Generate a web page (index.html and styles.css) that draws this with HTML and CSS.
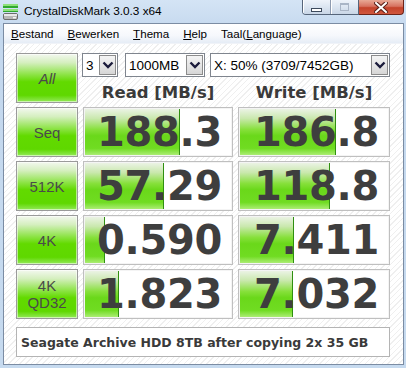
FILE: index.html
```html
<!DOCTYPE html>
<html lang="nl">
<head>
    <meta charset="UTF-8">
    <title>CrystalDiskMark 3.0.3 x64</title>
    <link rel="stylesheet" href="styles.css">
</head>
<body>
<div class="window">
    <div class="titlebar">
        <svg class="app-icon" width="16" height="17" viewBox="0 0 16 17">
            <rect x="0" y="0" width="15" height="2" fill="#8fe07a"/>
            <rect x="0" y="2" width="15" height="2" fill="#2fa82f"/>
            <rect x="0" y="5" width="15" height="2" fill="#8fe07a"/>
            <rect x="0" y="7" width="15" height="1" fill="#2fa82f"/>
            <rect x="0.5" y="9.5" width="14" height="6" rx="1.5" fill="#b8b8b8" stroke="#6c6c6c"/>
            <rect x="1" y="10" width="13" height="2" fill="#e8e8e8"/>
            <rect x="10" y="13" width="3" height="1.5" fill="#f4f4f4"/>
        </svg>
        <span class="title">CrystalDiskMark 3.0.3 x64</span>
        <div class="caption">
            <div class="cap-group">
                <span class="cap-btn"><span class="min-glyph"></span></span>
                <span class="cap-btn"><span class="max-glyph"></span></span>
            </div>
            <span class="cap-close">
                <svg width="14" height="11" viewBox="0 0 14 11">
                    <path d="M2 1 L12 10 M12 1 L2 10" stroke="#5a2018" stroke-width="4" stroke-linecap="square"/>
                    <path d="M2 1 L12 10 M12 1 L2 10" stroke="#ffffff" stroke-width="2" stroke-linecap="square"/>
                </svg>
            </span>
        </div>
    </div>

    <div class="client">
        <div class="menubar">
            <span class="menu-item"><u>B</u>estand</span>
            <span class="menu-item"><u>B</u>ewerken</span>
            <span class="menu-item"><u>T</u>hema</span>
            <span class="menu-item"><u>H</u>elp</span>
            <span class="menu-item">Taal(<u>L</u>anguage)</span>
        </div>

        <div class="main">
            <div class="grid">
                <div class="test-btn all">All</div>
                <div class="controls">
                    <div class="select sel-count"><span class="sel-text">3</span><span class="sel-arrow"><svg width="12" height="8" viewBox="0 0 12 8"><path d="M1.5 1.5 L6 6 L10.5 1.5" fill="none" stroke="#1c1c3c" stroke-width="2.4"/></svg></span></div>
                    <div class="select sel-size"><span class="sel-text">1000MB</span><span class="sel-arrow"><svg width="12" height="8" viewBox="0 0 12 8"><path d="M1.5 1.5 L6 6 L10.5 1.5" fill="none" stroke="#1c1c3c" stroke-width="2.4"/></svg></span></div>
                    <div class="select sel-drive"><span class="sel-text">X: 50% (3709/7452GB)</span><span class="sel-arrow"><svg width="12" height="8" viewBox="0 0 12 8"><path d="M1.5 1.5 L6 6 L10.5 1.5" fill="none" stroke="#1c1c3c" stroke-width="2.4"/></svg></span></div>
                </div>
                <div class="head">Read [MB/s]</div>
                <div class="head">Write [MB/s]</div>

                <div class="test-btn">Seq</div>
                <div class="cell" style="--w:96px">188.3</div>
                <div class="cell" style="--w:97px">186.8</div>

                <div class="test-btn">512K</div>
                <div class="cell" style="--w:80px">57.29</div>
                <div class="cell" style="--w:91px">118.8</div>

                <div class="test-btn">4K</div>
                <div class="cell" style="--w:21px">0.590</div>
                <div class="cell" style="--w:55px">7.411</div>

                <div class="test-btn two-line">4K<br>QD32</div>
                <div class="cell" style="--w:35px">1.823</div>
                <div class="cell" style="--w:54px">7.032</div>
            </div>

            <div class="comment">Seagate Archive HDD 8TB after copying 2x 35 GB</div>
        </div>
    </div>
</div>
</body>
</html>
```

FILE: styles.css
```css
html, body { margin: 0; padding: 0; }
body { width: 406px; height: 368px; overflow: hidden; background: #c6daef; font-family: "Liberation Sans", Arial, sans-serif; }

/* window frame */
.window { width: 406px; height: 368px; box-sizing: border-box; padding: 0 2px 3px 3px; display: flex; flex-direction: column; background: linear-gradient(#d4e4f5, #c4d8ee 30px, #c6daef); }
.titlebar { height: 23px; display: flex; align-items: flex-start; flex-shrink: 0; }
.app-icon { margin: 4px 0 0 0; flex-shrink: 0; }
.title { margin: 4px 0 0 5px; font-size: 11.8px; color: #000; line-height: 14px; }

.caption { margin-left: auto; display: flex; height: 15px; }
.cap-group { display: flex; border: 1px solid #56657a; border-top: none; border-radius: 0 0 0 4px; overflow: hidden; }
.cap-btn { width: 27px; height: 14px; display: flex; align-items: center; justify-content: center; background: linear-gradient(#eef3fa, #dbe5f1 50%, #c9d6e6); box-shadow: inset 1px 0 0 #fff; }
.cap-btn + .cap-btn { border-left: 1px solid #8e9bb0; }
.min-glyph { width: 9px; height: 2px; border: 1px solid #3d4a5c; background: #fff; margin-top: 5px; }
.max-glyph { width: 7px; height: 5px; border: 1px solid #a9b5c6; border-top-width: 2px; }
.cap-close { width: 44px; height: 14px; display: flex; align-items: center; justify-content: center; border: 1px solid #6e2418; border-top: none; border-left: none; border-radius: 0 0 4px 0; background: linear-gradient(#e8a996, #d77260 45%, #c4432b 55%, #d0573e); }

/* client area */
.client { flex: 1; border: 1px solid #7b8ca3; background-color: #fff; background-image: repeating-linear-gradient(135deg, #ffffff 0 3px, #efefef 3px 4px); display: flex; flex-direction: column; }
.menubar { height: 19px; display: flex; align-items: center; padding-left: 0; background: linear-gradient(#ffffff, #f6f8fc 60%, #e6edf6); border-bottom: 1px solid #f0f3f8; }
.menu-item { font-size: 11.6px; padding: 0 7px 0 7px; color: #000; }
.menu-item u { text-underline-offset: 1px; }

.main { padding: 9px 0 0 12px; }
.grid { display: grid; grid-template-columns: 62px 150px 152px; grid-template-rows: 24px 22px 50px 50px 50px 50px; column-gap: 5px; row-gap: 4px; }

.test-btn { box-sizing: border-box; border: 1px solid #9a9a9a; box-shadow: inset 0 0 0 1px rgba(255,255,255,0.55); display: flex; align-items: center; justify-content: center; text-align: center; font-size: 15px; line-height: 17px; color: #4a4a4a; background: linear-gradient(#f3f8ef 0%, #d5efbf 18%, #8fe44a 42%, #62da00 58%, #5fd800 86%, #94e95a 100%); }
.test-btn.all { grid-row: 1 / 3; font-style: italic; }

.controls { grid-column: 2 / 4; display: flex; margin-left: -1px; }
.select { box-sizing: border-box; height: 24px; display: flex; align-items: center; border: 1px solid #7f858e; background: #fff; }
.sel-text { flex: 1; padding-left: 3px; font-size: 13.5px; color: #000; white-space: nowrap; }
.sel-arrow { width: 17px; height: 20px; margin-right: 1px; box-sizing: border-box; border: 1px solid #8c8c8c; background: linear-gradient(#f4f4f4, #e6e6e6 50%, #d6d6d6); display: flex; align-items: center; justify-content: center; }
.sel-count { width: 36px; }
.sel-size { width: 80px; margin-left: 7px; }
.sel-drive { width: 180px; margin-left: 5px; }

.head { display: flex; align-items: center; justify-content: center; font-family: "DejaVu Sans", Verdana, sans-serif; font-weight: bold; font-size: 16.5px; color: #3a3a3a; }

.cell { box-sizing: border-box; border: 1px solid #bfbfbf; box-shadow: inset 0 0 0 1px #f4f4f4; background-color: #fff; background-image: linear-gradient(to left, #2f8f10 1px, transparent 1px), linear-gradient(#eef4ea 0%, #c9e8ad 22%, #86e03a 45%, #6ad81a 58%, #70dc22 84%, #b4ef80 100%); background-size: var(--w) 100%, var(--w) 100%; background-repeat: no-repeat; display: flex; align-items: center; justify-content: flex-end; padding-right: 10px; font-family: "DejaVu Sans", Verdana, sans-serif; font-weight: bold; font-size: 40px; color: #3e3e3e; letter-spacing: -0.3px; }

.comment { box-sizing: border-box; width: 374px; height: 30px; margin-top: 8px; border: 1px solid #b4b4b4; background: #fff; display: flex; align-items: center; padding-left: 4px; font-family: "DejaVu Sans", Verdana, sans-serif; font-weight: bold; font-size: 12.5px; color: #3a3a3a; white-space: nowrap; }
```
